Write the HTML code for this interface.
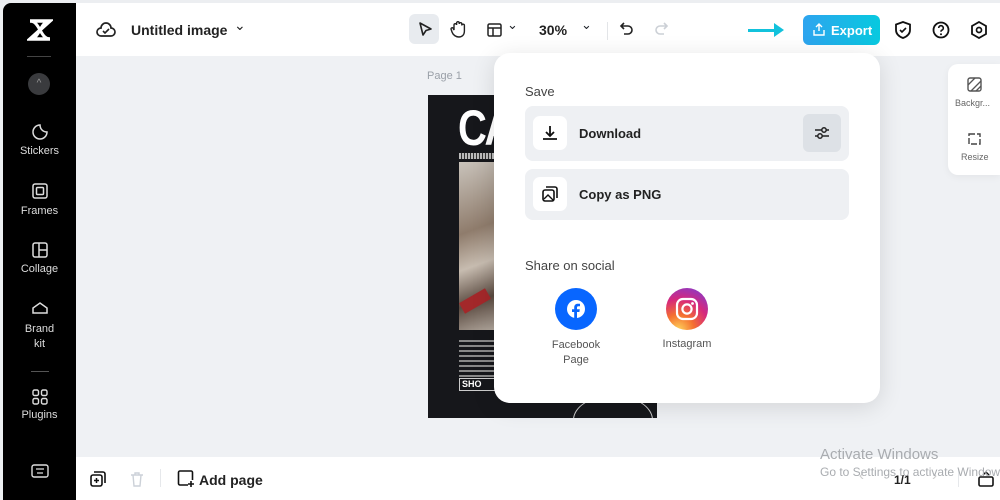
<!DOCTYPE html>
<html><head><meta charset="utf-8"><style>
*{margin:0;padding:0;box-sizing:border-box}
body{width:1000px;height:500px;overflow:hidden;background:#eef0f3;font-family:"Liberation Sans",sans-serif;position:relative;color:#1f2329}
.abs{position:absolute;white-space:nowrap}
.side{left:3px;top:3px;width:73px;height:497px;background:#000;border-radius:8px 0 0 0;color:#ddd;font-size:11px;text-align:center}
.side .it{position:absolute;left:0;width:73px}
.top{left:76px;top:3px;width:924px;height:53px;background:#fff}
.canvas{left:76px;top:56px;width:924px;height:401px;background:#eff1f4}
.bottom{left:76px;top:457px;width:924px;height:43px;background:#fff}
.pop{left:494px;top:53px;width:386px;height:350px;background:#fff;border-radius:16px;box-shadow:0 4px 24px rgba(0,0,0,.12)}
.row{position:absolute;left:31px;width:324px;background:#eef0f3;border-radius:8px}
.ib{position:absolute;left:8px;width:34px;height:34px;background:#fff;border-radius:7px}
svg{display:block}
</style></head><body>
<div class="abs" style="left:0;top:0;width:1000px;height:3px;background:#eceef1"></div>
<div class="abs side">
 <svg class="it" style="top:15px;left:24px;width:26px" width="26" height="24" viewBox="0 0 26 24"><path d="M3 3h20L3 21h20" stroke="#fff" stroke-width="3.5" fill="none"/><path d="M3 3c10 0 10 18 20 18M23 3C13 3 13 21 3 21" stroke="#fff" stroke-width="3" fill="none"/></svg>
 <div class="abs" style="left:24px;top:53px;width:24px;height:1px;background:#444"></div>
 <div class="abs" style="left:25px;top:70px;width:22px;height:22px;border-radius:50%;background:#3a3b3e;color:#999;font-size:10px;line-height:22px">^</div>
 <svg class="abs" style="left:28px;top:120px" width="18" height="18" viewBox="0 0 18 18"><path d="M9 2a7 7 0 1 0 7 7c-4 0-7-3-7-7z" stroke="#ddd" stroke-width="1.5" fill="none"/></svg>
 <div class="it" style="top:142px">Stickers</div>
 <svg class="abs" style="left:29px;top:180px" width="16" height="16"><rect x="1" y="1" width="14" height="14" rx="2" stroke="#ddd" stroke-width="1.5" fill="none"/><rect x="4.5" y="4.5" width="7" height="7" rx="1" stroke="#ddd" stroke-width="1.5" fill="none"/></svg>
 <div class="it" style="top:202px">Frames</div>
 <svg class="abs" style="left:29px;top:239px" width="16" height="16"><rect x="1" y="1" width="14" height="14" rx="2" stroke="#ddd" stroke-width="1.5" fill="none"/><path d="M7 1v14M7 8h8" stroke="#ddd" stroke-width="1.5"/></svg>
 <div class="it" style="top:260px">Collage</div>
 <svg class="abs" style="left:28px;top:298px" width="18" height="14"><path d="M2 12V7l7-5 7 5v5z" stroke="#ddd" stroke-width="1.5" fill="none"/></svg>
 <div class="it" style="top:319px;line-height:15px">Brand<br>kit</div>
 <div class="abs" style="left:28px;top:368px;width:18px;height:1px;background:#555"></div>
 <svg class="abs" style="left:29px;top:386px" width="16" height="16"><g stroke="#ddd" stroke-width="1.4" fill="none"><rect x="1" y="1" width="5.5" height="5.5" rx="1.5"/><rect x="9.5" y="1" width="5.5" height="5.5" rx="1.5"/><rect x="1" y="9.5" width="5.5" height="5.5" rx="1.5"/><rect x="9.5" y="9.5" width="5.5" height="5.5" rx="1.5"/></g></svg>
 <div class="it" style="top:406px">Plugins</div>
 <svg class="abs" style="left:28px;top:461px" width="18" height="14"><rect x="1" y="1" width="16" height="12" rx="2" stroke="#ddd" stroke-width="1.4" fill="none"/><path d="M5 5h8M6 9h6" stroke="#ddd" stroke-width="1.2"/></svg>
</div>
<div class="abs" style="left:76px;top:230px;width:6px;height:48px;background:#1a1a1a;border-radius:0 6px 6px 0"></div>
<div class="abs top">
 <svg class="abs" style="left:20px;top:18px" width="20" height="18" viewBox="0 0 20 18"><path d="M5 15a4 4 0 0 1 0-8 5 5 0 0 1 10 0 4 4 0 0 1 0 8z" stroke="#222" stroke-width="1.7" fill="none"/><path d="M7 10l2 2 4-4" stroke="#222" stroke-width="1.6" fill="none"/></svg>
 <div class="abs" style="left:55px;top:19px;font-size:14px;font-weight:bold;color:#222">Untitled image</div>
 <div class="abs" style="left:158px;top:14px;font-size:14px;color:#222">⌄</div>
 <div class="abs" style="left:333px;top:11px;width:30px;height:30px;background:#e8ebef;border-radius:6px"></div>
 <svg class="abs" style="left:341px;top:18px" width="16" height="16"><path d="M3 2l11 6-5 1.5L6 14z" stroke="#222" stroke-width="1.6" fill="none" stroke-linejoin="round"/></svg>
 <svg class="abs" style="left:374px;top:17px" width="16" height="18"><path d="M4 10V5a1.3 1.3 0 0 1 2.6 0V3a1.3 1.3 0 0 1 2.6 0v1a1.3 1.3 0 0 1 2.6 0v1.5a1.3 1.3 0 0 1 2.6 0V11c0 4-2.5 6-5.5 6S3 15 2 12l-1-3a1.2 1.2 0 0 1 2-1z" stroke="#222" stroke-width="1.4" fill="none"/></svg>
 <svg class="abs" style="left:411px;top:20px" width="15" height="14"><rect x="1" y="1" width="13" height="12" rx="1.5" stroke="#222" stroke-width="1.5" fill="none"/><path d="M1 5h13M6 5v8" stroke="#222" stroke-width="1.5"/></svg>
 <div class="abs" style="left:431px;top:14px;font-size:13px">⌄</div>
 <div class="abs" style="left:463px;top:19px;font-size:14px;font-weight:bold;color:#222">30%</div>
 <div class="abs" style="left:505px;top:14px;font-size:13px">⌄</div>
 <div class="abs" style="left:531px;top:19px;width:1px;height:18px;background:#e3e5e8"></div>
 <svg class="abs" style="left:543px;top:18px" width="16" height="16"><path d="M5 2L2 5l3 3M2 5h7a4 4 0 0 1 0 8H5" stroke="#222" stroke-width="1.6" fill="none"/></svg>
 <svg class="abs" style="left:577px;top:18px" width="16" height="16"><path d="M11 2l3 3-3 3M14 5H7a4 4 0 0 0 0 8h4" stroke="#ccd0d6" stroke-width="1.6" fill="none"/></svg>
 <div class="abs" style="left:672px;top:26px;width:30px;height:3px;background:#12c2dc"></div>
 <div class="abs" style="left:698px;top:20px;width:0;height:0;border-left:10px solid #12c2dc;border-top:7px solid transparent;border-bottom:7px solid transparent"></div>
 <div class="abs" style="left:727px;top:12px;width:77px;height:30px;border-radius:6px;background:linear-gradient(90deg,#2ea4ef,#07c9df)"></div>
 <svg class="abs" style="left:737px;top:20px" width="12" height="13"><path d="M6 8V1M3 4l3-3 3 3M1 7v5h10V7" stroke="#fff" stroke-width="1.4" fill="none"/></svg>
 <div class="abs" style="left:755px;top:20px;font-size:13px;font-weight:bold;color:#fff">Export</div>
 <svg class="abs" style="left:818px;top:18px" width="18" height="18"><path d="M9 1l7 2.5V9c0 4-3 6.5-7 8-4-1.5-7-4-7-8V3.5z" stroke="#111" stroke-width="1.8" fill="none"/><path d="M6 9l2 2 4-4" stroke="#111" stroke-width="1.6" fill="none"/></svg>
 <svg class="abs" style="left:856px;top:18px" width="18" height="18"><circle cx="9" cy="9" r="7.5" stroke="#111" stroke-width="1.8" fill="none"/><path d="M6.7 7a2.3 2.3 0 1 1 3 2.2c-.7.3-.7.8-.7 1.6" stroke="#111" stroke-width="1.6" fill="none"/><circle cx="9" cy="13.2" r="1" fill="#111"/></svg>
 <svg class="abs" style="left:894px;top:18px" width="18" height="18"><path d="M9 1l7 4v8l-7 4-7-4V5z" stroke="#111" stroke-width="1.8" fill="none"/><circle cx="9" cy="9" r="2.5" stroke="#111" stroke-width="1.7" fill="none"/></svg>
</div>
<div class="abs canvas"></div>
<div class="abs" style="left:427px;top:70px;font-size:11px;color:#9aa0a8">Page 1</div>
<div class="abs" style="left:428px;top:95px;width:229px;height:323px;background:#16171b;overflow:hidden">
 <div class="abs" style="left:30px;top:4px;font-size:50px;font-weight:bold;color:#fff;letter-spacing:-3px;transform:scaleX(.8);transform-origin:left">CA</div>
 <div class="abs" style="left:31px;top:58px;width:40px;height:6px;background:repeating-linear-gradient(90deg,#bbb 0 2px,#333 2px 3px)"></div>
 <div class="abs" style="left:31px;top:67px;width:40px;height:168px;background:linear-gradient(160deg,#c9c3bb,#8f7c6c 40%,#c7bcb0 60%,#5a4a40 80%,#b6aca2)"></div>
 <div class="abs" style="left:32px;top:200px;width:30px;height:12px;background:#a3282a;transform:rotate(-30deg)"></div>
 <div class="abs" style="left:31px;top:245px;width:36px;height:40px;background:repeating-linear-gradient(0deg,#16171b 0 3px,#888 3px 5px)"></div>
 <div class="abs" style="left:31px;top:283px;width:40px;height:13px;border:1px solid #ccc;color:#fff;font-size:9px;font-weight:bold;line-height:11px;padding-left:2px">SHO</div>
 <div class="abs" style="left:145px;top:300px;width:80px;height:50px;border:1px solid #ccc;border-radius:50%"></div>
</div>
<div class="abs" style="left:948px;top:64px;width:52px;height:111px;background:#fff;border-radius:10px 0 0 10px;box-shadow:0 2px 8px rgba(0,0,0,.05)"></div>
<svg class="abs" style="left:967px;top:77px" width="15" height="15"><rect x="1" y="1" width="13" height="13" rx="2" stroke="#555" stroke-width="1.4" fill="none"/><path d="M1 8l7-7M4 14L14 4M9 14l5-5" stroke="#555" stroke-width="1.3"/></svg>
<div class="abs" style="left:955px;top:98px;font-size:9px;color:#666">Backgr...</div>
<svg class="abs" style="left:967px;top:131px" width="15" height="15"><rect x="2" y="3" width="11" height="10" stroke="#444" stroke-width="1.4" fill="none" stroke-dasharray="6 2"/></svg>
<div class="abs" style="left:961px;top:152px;font-size:9px;color:#666">Resize</div>
<div class="abs bottom">
 <svg class="abs" style="left:14px;top:14px" width="16" height="16"><rect x="1" y="4" width="11" height="11" rx="2" stroke="#111" stroke-width="1.6" fill="none"/><path d="M4 1h9a2 2 0 0 1 2 2v9" stroke="#111" stroke-width="1.6" fill="none"/><path d="M6.5 7v5M4 9.5h5" stroke="#111" stroke-width="1.5"/></svg>
 <svg class="abs" style="left:54px;top:14px" width="14" height="16"><path d="M1 4h12M5 4V2h4v2M3 4l1 11h6l1-11" stroke="#ccd1d8" stroke-width="1.4" fill="none"/></svg>
 <div class="abs" style="left:84px;top:12px;width:1px;height:18px;background:#e6e8eb"></div>
 <svg class="abs" style="left:101px;top:13px" width="18" height="18"><path d="M11 15H3a1.5 1.5 0 0 1-1.5-1.5v-11A1.5 1.5 0 0 1 3 1h11a1.5 1.5 0 0 1 1.5 1.5V10" stroke="#111" stroke-width="1.6" fill="none"/><path d="M14 11v6M11 14h6" stroke="#111" stroke-width="1.6"/></svg>
 <div class="abs" style="left:123px;top:15px;font-size:14px;font-weight:bold;color:#222">Add page</div>
 <div class="abs" style="left:783px;top:10px;font-size:15px;color:#ccc">‹</div>
 <div class="abs" style="left:818px;top:16px;font-size:12px;font-weight:bold;color:#222">1/1</div>
 <div class="abs" style="left:856px;top:10px;font-size:15px;color:#ccc">›</div>
 <div class="abs" style="left:882px;top:12px;width:1px;height:18px;background:#e6e8eb"></div>
 <svg class="abs" style="left:902px;top:14px" width="16" height="16"><rect x="1" y="6" width="14" height="9" rx="1.5" stroke="#111" stroke-width="1.6" fill="none"/><path d="M5 4l3-3 3 3" stroke="#111" stroke-width="1.4" fill="none"/></svg>
</div>
<div class="abs" style="left:820px;top:446px;font-size:15px;color:#a9acb0">Activate Windows</div>
<div class="abs" style="left:820px;top:465px;font-size:12px;color:#a9acb0">Go to Settings to activate Windows.</div>
<div class="abs pop">
 <div class="abs" style="left:31px;top:31px;font-size:13px;color:#444">Save</div>
 <div class="row" style="top:53px;height:55px">
  <div class="ib" style="top:10px"></div>
  <svg class="abs" style="left:16px;top:18px" width="18" height="18"><path d="M9 2v10M5 8l4 4 4-4M2 15h14" stroke="#111" stroke-width="1.8" fill="none"/></svg>
  <div class="abs" style="left:54px;top:20px;font-size:13px;font-weight:bold;color:#222">Download</div>
  <div class="abs" style="left:278px;top:8px;width:38px;height:38px;background:#dde1e6;border-radius:6px"></div>
  <svg class="abs" style="left:288px;top:18px" width="18" height="18"><path d="M2 6h14M2 12h14" stroke="#222" stroke-width="1.5"/><circle cx="11" cy="6" r="2.2" fill="#dde1e6" stroke="#222" stroke-width="1.5"/><circle cx="7" cy="12" r="2.2" fill="#dde1e6" stroke="#222" stroke-width="1.5"/></svg>
 </div>
 <div class="row" style="top:116px;height:51px">
  <div class="ib" style="top:8px"></div>
  <svg class="abs" style="left:17px;top:17px" width="16" height="16"><rect x="1" y="4" width="11" height="11" rx="2" stroke="#111" stroke-width="1.6" fill="none"/><path d="M4 1h9a2 2 0 0 1 2 2v9" stroke="#111" stroke-width="1.6" fill="none"/><path d="M2 13l4-4 5 5" stroke="#111" stroke-width="1.4" fill="none"/></svg>
  <div class="abs" style="left:54px;top:18px;font-size:13px;font-weight:bold;color:#222">Copy as PNG</div>
 </div>
 <div class="abs" style="left:31px;top:205px;font-size:13px;color:#444">Share on social</div>
 <div class="abs" style="left:61px;top:235px;width:42px;height:42px;border-radius:50%;background:#0866ff"></div>
 <svg class="abs" style="left:72px;top:246px" width="20" height="20"><circle cx="10" cy="10" r="9" fill="#fff"/><path d="M11 20v-7h2.4l.4-2.8H11V8.6c0-.8.3-1.4 1.4-1.4H14V4.8c-.3 0-1.2-.1-2.2-.1-2.1 0-3.6 1.3-3.6 3.7v1.9H6V13h2.2v7z" fill="#0866ff"/></svg>
 <div class="abs" style="left:40px;top:285px;width:84px;text-align:center;font-size:11px;color:#555;line-height:15px">Facebook<br>Page</div>
 <div class="abs" style="left:172px;top:235px;width:42px;height:42px;border-radius:50%;background:radial-gradient(circle at 30% 100%,#fdd35c 0,#f5712f 30%,#d6287c 60%,#8a3ac7 90%)"></div>
 <svg class="abs" style="left:181px;top:244px" width="24" height="24"><rect x="2" y="2" width="20" height="20" rx="6" stroke="#fff" stroke-width="2.2" fill="none"/><circle cx="12" cy="12" r="4.6" stroke="#fff" stroke-width="2.2" fill="none"/><circle cx="17.5" cy="6.5" r="1.4" fill="#fff"/></svg>
 <div class="abs" style="left:150px;top:285px;width:86px;text-align:center;font-size:11px;color:#555">Instagram</div>
</div>
</body></html>
